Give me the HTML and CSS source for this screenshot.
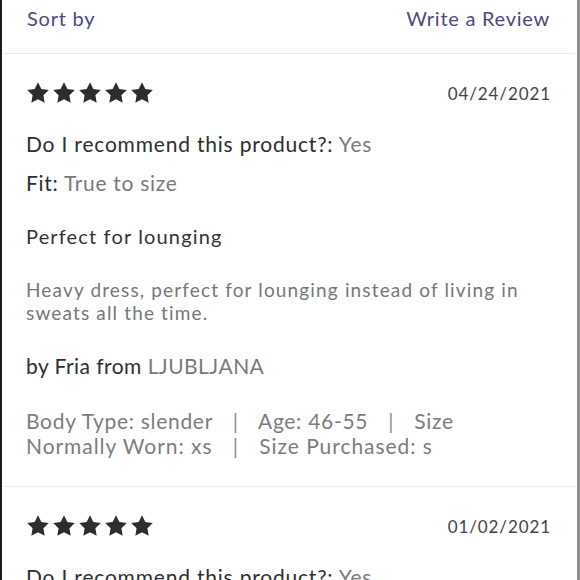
FILE: index.html
```html
<!DOCTYPE html>
<html>
<head>
<meta charset="utf-8">
<link rel="stylesheet" href="styles.css">
</head>
<body>
<div class="page">
  <div class="toolbar">
    <span class="link">Sort by</span>
    <span class="link">Write a Review</span>
  </div>
  <div class="review">
    <div class="head">
      <span class="stars" aria-label="5 stars">
        <svg viewBox="0 0 24 24"><path d="M12 2l3.09 6.26L22 9.27l-5 4.87 1.18 6.88L12 17.77l-6.18 3.25L7 14.14 2 9.27l6.91-1.01L12 2z"/></svg><svg viewBox="0 0 24 24"><path d="M12 2l3.09 6.26L22 9.27l-5 4.87 1.18 6.88L12 17.77l-6.18 3.25L7 14.14 2 9.27l6.91-1.01L12 2z"/></svg><svg viewBox="0 0 24 24"><path d="M12 2l3.09 6.26L22 9.27l-5 4.87 1.18 6.88L12 17.77l-6.18 3.25L7 14.14 2 9.27l6.91-1.01L12 2z"/></svg><svg viewBox="0 0 24 24"><path d="M12 2l3.09 6.26L22 9.27l-5 4.87 1.18 6.88L12 17.77l-6.18 3.25L7 14.14 2 9.27l6.91-1.01L12 2z"/></svg><svg viewBox="0 0 24 24"><path d="M12 2l3.09 6.26L22 9.27l-5 4.87 1.18 6.88L12 17.77l-6.18 3.25L7 14.14 2 9.27l6.91-1.01L12 2z"/></svg>
      </span>
      <span class="date">04/24/2021</span>
    </div>
    <p class="attr"><span class="label">Do I recommend this product?:</span> <span class="val">Yes</span></p>
    <p class="attr fit"><span class="label">Fit:</span> <span class="val">True to size</span></p>
    <h3 class="title">Perfect for lounging</h3>
    <p class="body">Heavy dress, perfect for lounging instead of living in sweats all the time.</p>
    <p class="author"><span class="label">by Fria from</span> <span class="val">LJUBLJANA</span></p>
    <p class="meta">Body Type: slender <span class="sep">|</span> Age: 46-55 <span class="sep">|</span> Size<br><span class="line2">Normally Worn: xs <span class="sep">|</span> Size Purchased: s</span></p>
  </div>
  <div class="review">
    <div class="head">
      <span class="stars" aria-label="5 stars">
        <svg viewBox="0 0 24 24"><path d="M12 2l3.09 6.26L22 9.27l-5 4.87 1.18 6.88L12 17.77l-6.18 3.25L7 14.14 2 9.27l6.91-1.01L12 2z"/></svg><svg viewBox="0 0 24 24"><path d="M12 2l3.09 6.26L22 9.27l-5 4.87 1.18 6.88L12 17.77l-6.18 3.25L7 14.14 2 9.27l6.91-1.01L12 2z"/></svg><svg viewBox="0 0 24 24"><path d="M12 2l3.09 6.26L22 9.27l-5 4.87 1.18 6.88L12 17.77l-6.18 3.25L7 14.14 2 9.27l6.91-1.01L12 2z"/></svg><svg viewBox="0 0 24 24"><path d="M12 2l3.09 6.26L22 9.27l-5 4.87 1.18 6.88L12 17.77l-6.18 3.25L7 14.14 2 9.27l6.91-1.01L12 2z"/></svg><svg viewBox="0 0 24 24"><path d="M12 2l3.09 6.26L22 9.27l-5 4.87 1.18 6.88L12 17.77l-6.18 3.25L7 14.14 2 9.27l6.91-1.01L12 2z"/></svg>
      </span>
      <span class="date">01/02/2021</span>
    </div>
    <p class="attr"><span class="label">Do I recommend this product?:</span> <span class="val">Yes</span></p>
  </div>
</div>
</body>
</html>
```
FILE: styles.css
```css
html, body {
  margin: 0;
  padding: 0;
  background: #fff;
}
body {
  font-family: Lato, "Open Sans", sans-serif;
  color: #333;
}
.page {
  height: 580px;
  overflow: hidden;
  border-left: 2px solid #1a1a1a;
  border-right: 3px solid #8e8e8e;
  box-sizing: border-box;
}
.toolbar {
  display: flex;
  justify-content: space-between;
  align-items: center;
  height: 54px;
  padding: 0 25px 0 24px;
  border-bottom: 1px solid #e9e9e9;
  box-sizing: border-box;
  margin: 0 2px 0 1px;
}
.link {
  font-size: 20px;
  letter-spacing: 0.75px;
  color: #4b4a7e;
  margin-top: -17px;
}
.review {
  padding: 25px 24px 0 23px;
  margin: 0 2px 0 1px;
  border-bottom: 1px solid #ececec;
  height: 433px;
  box-sizing: border-box;
}
.head {
  display: flex;
  justify-content: space-between;
  align-items: center;
  height: 28px;
}
.stars {
  display: flex;
  margin-left: -1px;
}
.stars svg {
  width: 26px;
  height: 26px;
  fill: #2d2d2d;
  display: block;
}
.date {
  font-size: 17px;
  color: #444;
  letter-spacing: 0.9px;
}
p, h3 {
  margin: 0;
}
.attr {
  font-size: 21px;
  letter-spacing: 0.8px;
  margin-top: 23px;
  line-height: 27px;
}
.attr.fit {
  margin-top: 12px;
  letter-spacing: 0.7px;
}
.label {
  color: #2e2e2e;
}
.val {
  color: #7a7a7a;
}
.title {
  font-weight: normal;
  font-size: 20px;
  letter-spacing: 1.15px;
  line-height: 26px;
  margin-top: 27px;
  color: #333;
}
.body {
  font-size: 19px;
  letter-spacing: 1.15px;
  line-height: 23px;
  color: #777;
  margin-top: 29px;
}
.author {
  font-size: 21px;
  letter-spacing: 0.45px;
  line-height: 26px;
  margin-top: 29px;
}
.meta {
  font-size: 21px;
  letter-spacing: 0.7px;
  line-height: 25px;
  color: #7d7d7d;
  margin-top: 29px;
}
.line2 {
  letter-spacing: 0.95px;
}
.sep {
  margin: 0 14px;
  color: #8a8a8a;
}
```
